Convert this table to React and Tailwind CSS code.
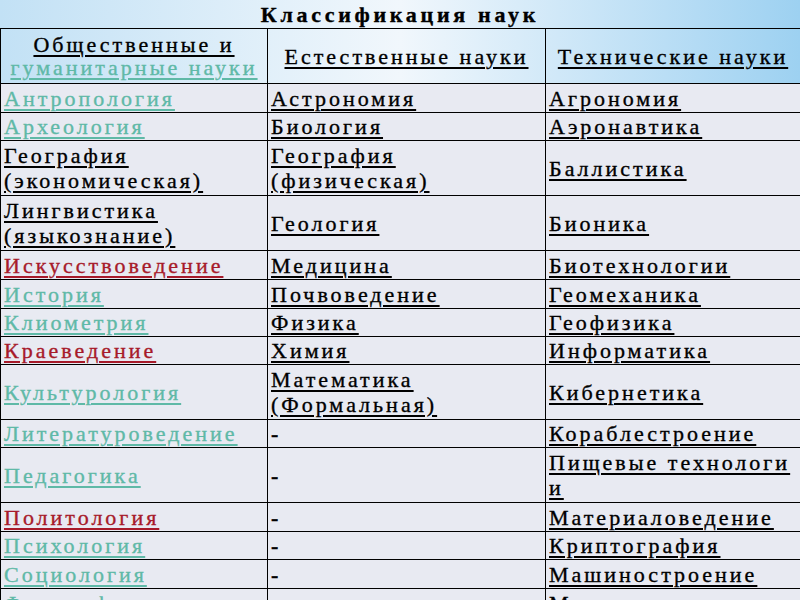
const teal = "text-[#5fb9a7]";
const red = "text-[#a71a2a]";

const rows = [
  { h: "h-[29px]", a: ["Антропология"], ac: teal, b: ["Астрономия"], c: ["Агрономия"] },
  { h: "h-[28px]", a: ["Археология"], ac: teal, b: ["Биология"], c: ["Аэронавтика"] },
  { h: "h-[55px]", a: ["География", "(экономическая)"], b: ["География", "(физическая)"], c: ["Баллистика"] },
  { h: "h-[55px]", a: ["Лингвистика", "(языкознание)"], b: ["Геология"], c: ["Бионика"] },
  { h: "h-[29px]", a: ["Искусствоведение"], ac: red, b: ["Медицина"], c: ["Биотехнологии"] },
  { h: "h-[29px]", a: ["История"], ac: teal, b: ["Почвоведение"], c: ["Геомеханика"] },
  { h: "h-[28px]", a: ["Клиометрия"], ac: teal, b: ["Физика"], c: ["Геофизика"] },
  { h: "h-[28px]", a: ["Краеведение"], ac: red, b: ["Химия"], c: ["Информатика"] },
  { h: "h-[55px]", a: ["Культурология"], ac: teal, b: ["Математика", "(Формальная)"], c: ["Кибернетика"] },
  { h: "h-[28px]", a: ["Литературоведение"], ac: teal, b: ["-"], c: ["Кораблестроение"] },
  { h: "h-[55px]", a: ["Педагогика"], ac: teal, b: ["-"], c: ["Пищевые технологи", "и"] },
  { h: "h-[29px]", a: ["Политология"], ac: red, b: ["-"], c: ["Материаловедение"] },
  { h: "h-[28px]", a: ["Психология"], ac: teal, b: ["-"], c: ["Криптография"] },
  { h: "h-[29px]", a: ["Социология"], ac: teal, b: ["-"], c: ["Машиностроение"] },
  { h: "h-[29px]", a: ["Философия"], ac: teal, b: ["-"], c: ["Механика"] },
];

const Cell = ({ lines, color = "text-black" }) => (
  <td className="border-[1.5px] border-black px-[3px] py-0 align-middle">
    {lines.map((l, i) =>
      l === "-" ? (
        <div key={i} className="font-bold">-</div>
      ) : (
        <div key={i} className={`${color} whitespace-nowrap`}>
          <span className="underline decoration-2 underline-offset-[3px]">{l}</span>
        </div>
      )
    )}
  </td>
);

const App = () => {
  return (
    <div
      className="w-[800px] h-[600px] overflow-hidden bg-[#e8eaf2] text-[22px] leading-[25px] tracking-[3px] [-webkit-text-stroke:0.35px_currentColor]"
      style={{ fontFamily: '"Liberation Serif", serif' }}
    >
      <div className="bg-gradient-to-r from-[#c2e1f5] via-[#f1f7fc] to-[#9dd1f1]">
        <h1 className="h-[28px] text-center font-bold text-[22px] tracking-[3.7px] leading-[30px] text-black">
          Классификация наук
        </h1>
        <table className="w-[800px] table-fixed border-collapse">
          <colgroup>
            <col className="w-[267px]" />
            <col className="w-[278px]" />
            <col className="w-[255px]" />
          </colgroup>
          <thead>
            <tr className="h-[55px]">
              <th className="border-[1.5px] border-black font-normal align-middle leading-[23px]">
                <div className="text-black">
                  <span className="underline decoration-2 underline-offset-[3px]">Общественные и </span>
                </div>
                <div className={teal}>
                  <span className="underline decoration-2 underline-offset-[3px]">гуманитарные науки</span>
                </div>
              </th>
              <th className="border-[1.5px] border-black font-normal align-middle">
                <span className="underline decoration-2 underline-offset-[3px]">Естественные науки</span>
              </th>
              <th className="border-[1.5px] border-black font-normal align-middle">
                <span className="underline decoration-2 underline-offset-[3px]">Технические науки</span>
              </th>
            </tr>
          </thead>
          <tbody className="bg-[#e8eaf2]">
            {rows.map((r, i) => (
              <tr key={i} className={r.h}>
                <Cell lines={r.a} color={r.ac} />
                <Cell lines={r.b} />
                <Cell lines={r.c} />
              </tr>
            ))}
          </tbody>
        </table>
      </div>
    </div>
  );
};

export default App;
